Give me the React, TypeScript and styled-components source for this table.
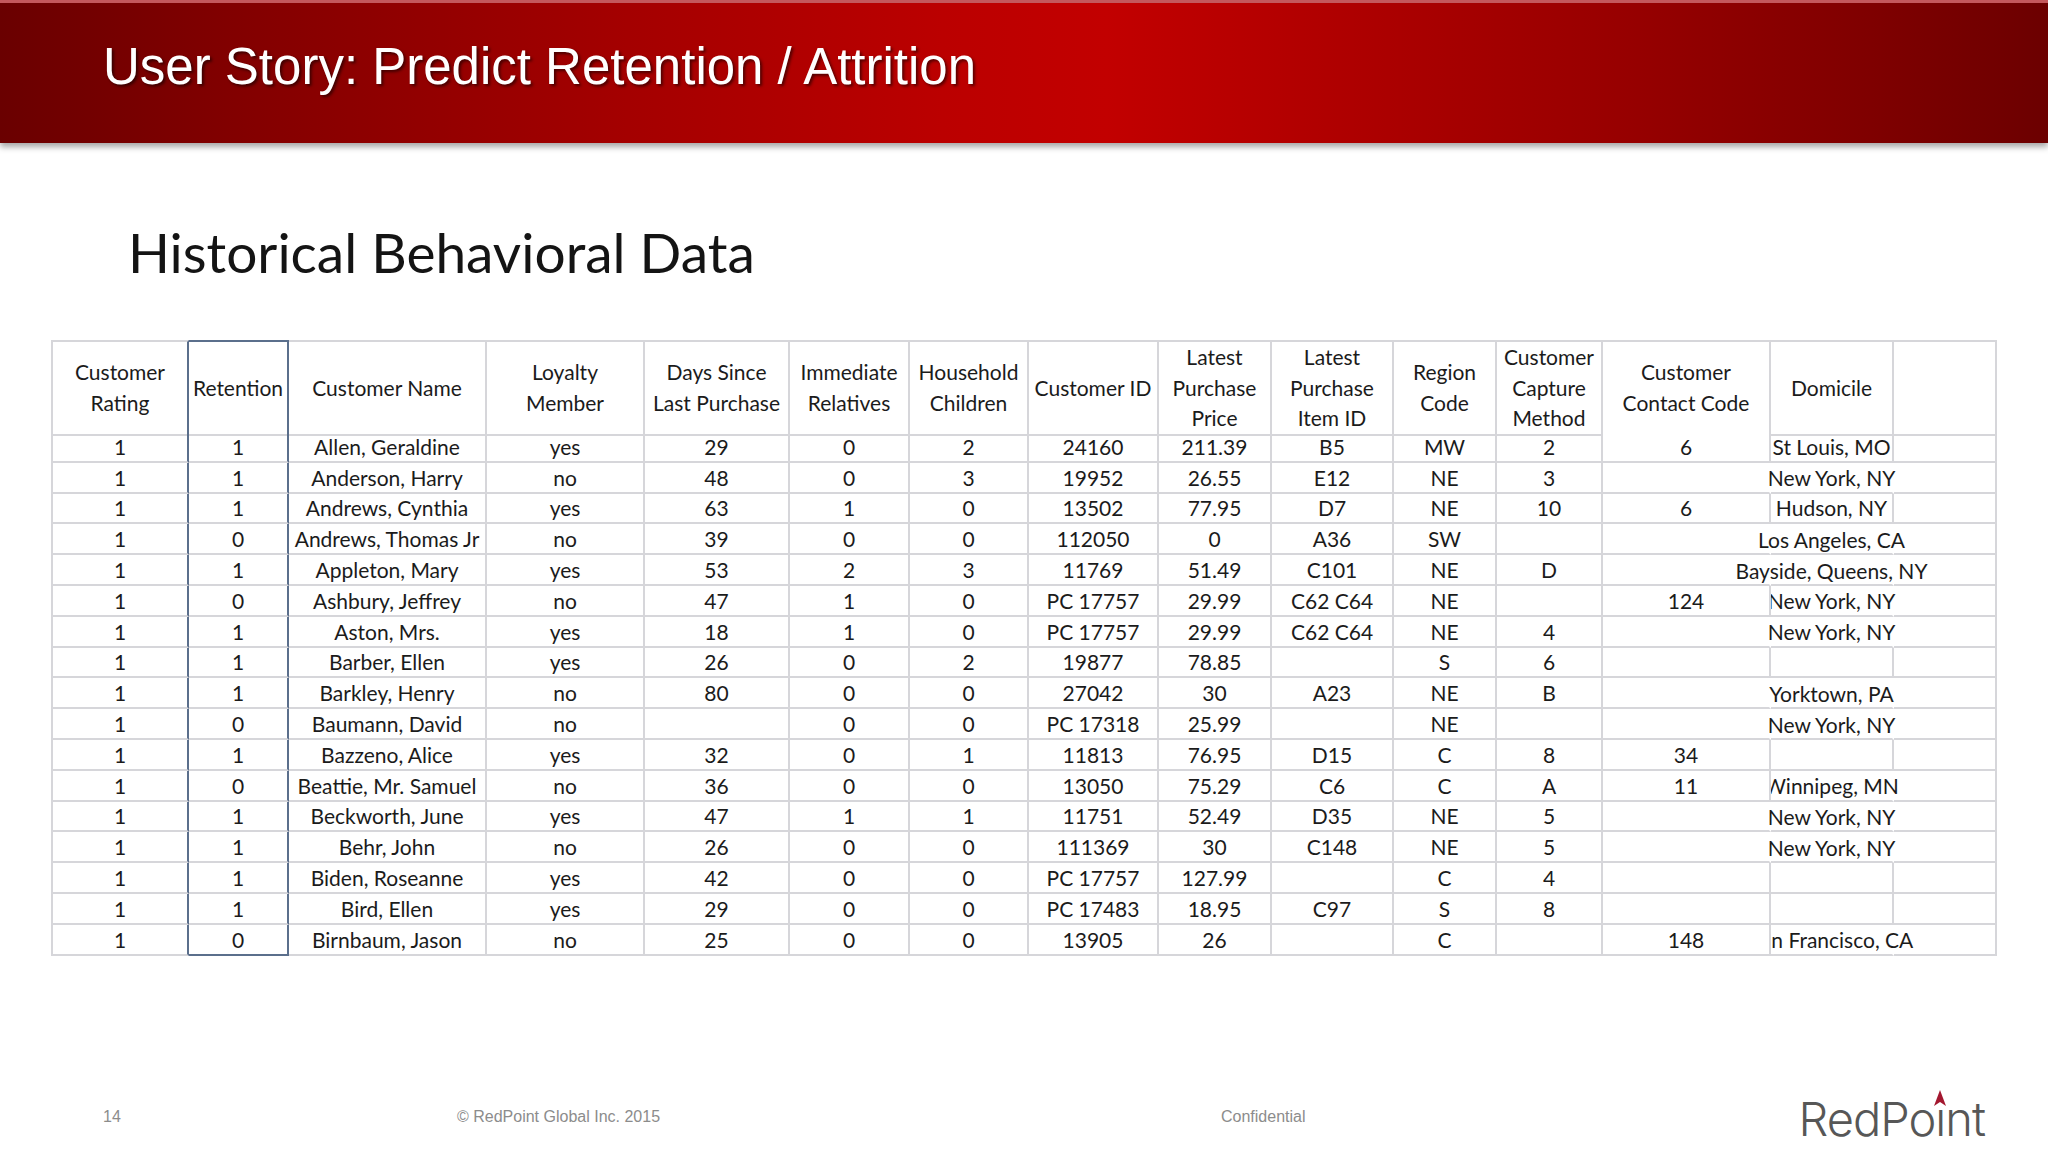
import React from 'react';
import styled, { createGlobalStyle } from 'styled-components';

const GRID = '#d6d6da';
const RET = '#5b6f8c';

// anchos de columna (px), como en la hoja original
const COLS = [136, 100, 198, 158, 145, 120, 119, 130, 113, 122, 103, 106, 168, 123, 103];

const HEADERS = [
  'Customer\nRating',
  'Retention',
  'Customer Name',
  'Loyalty\nMember',
  'Days Since\nLast Purchase',
  'Immediate\nRelatives',
  'Household\nChildren',
  'Customer ID',
  'Latest\nPurchase\nPrice',
  'Latest\nPurchase\nItem ID',
  'Region\nCode',
  'Customer\nCapture\nMethod',
  'Customer\nContact Code',
  'Domicile',
  '',
];

const ROWS: string[][] = [
  ['1', '1', 'Allen, Geraldine', 'yes', '29', '0', '2', '24160', '211.39', 'B5', 'MW', '2', '6', 'St Louis, MO'],
  ['1', '1', 'Anderson, Harry', 'no', '48', '0', '3', '19952', '26.55', 'E12', 'NE', '3', '', 'New York, NY'],
  ['1', '1', 'Andrews, Cynthia', 'yes', '63', '1', '0', '13502', '77.95', 'D7', 'NE', '10', '6', 'Hudson, NY'],
  ['1', '0', 'Andrews, Thomas Jr', 'no', '39', '0', '0', '112050', '0', 'A36', 'SW', '', '', 'Los Angeles, CA'],
  ['1', '1', 'Appleton, Mary', 'yes', '53', '2', '3', '11769', '51.49', 'C101', 'NE', 'D', '', 'Bayside, Queens, NY'],
  ['1', '0', 'Ashbury, Jeffrey', 'no', '47', '1', '0', 'PC 17757', '29.99', 'C62 C64', 'NE', '', '124', 'New York, NY'],
  ['1', '1', 'Aston, Mrs.', 'yes', '18', '1', '0', 'PC 17757', '29.99', 'C62 C64', 'NE', '4', '', 'New York, NY'],
  ['1', '1', 'Barber, Ellen', 'yes', '26', '0', '2', '19877', '78.85', '', 'S', '6', '', ''],
  ['1', '1', 'Barkley, Henry', 'no', '80', '0', '0', '27042', '30', 'A23', 'NE', 'B', '', 'Yorktown, PA'],
  ['1', '0', 'Baumann, David', 'no', '', '0', '0', 'PC 17318', '25.99', '', 'NE', '', '', 'New York, NY'],
  ['1', '1', 'Bazzeno, Alice', 'yes', '32', '0', '1', '11813', '76.95', 'D15', 'C', '8', '34', ''],
  ['1', '0', 'Beattie, Mr. Samuel', 'no', '36', '0', '0', '13050', '75.29', 'C6', 'C', 'A', '11', 'Winnipeg, MN'],
  ['1', '1', 'Beckworth, June', 'yes', '47', '1', '1', '11751', '52.49', 'D35', 'NE', '5', '', 'New York, NY'],
  ['1', '1', 'Behr, John', 'no', '26', '0', '0', '111369', '30', 'C148', 'NE', '5', '', 'New York, NY'],
  ['1', '1', 'Biden, Roseanne', 'yes', '42', '0', '0', 'PC 17757', '127.99', '', 'C', '4', '', ''],
  ['1', '1', 'Bird, Ellen', 'yes', '29', '0', '0', 'PC 17483', '18.95', 'C97', 'S', '8', '', ''],
  ['1', '0', 'Birnbaum, Jason', 'no', '25', '0', '0', '13905', '26', '', 'C', '', '148', 'San Francisco, CA'],
];

// textos que caben en la celda de Domicile (los demás se desbordan, como en Excel)
const FITS = new Set(['St Louis, MO', 'Hudson, NY', '']);

const GlobalStyle = createGlobalStyle`
  html, body {
    margin: 0;
    padding: 0;
    background: #ffffff;
  }
  * {
    box-sizing: border-box;
  }
`;

const Page = styled.div`
  width: 2048px;
  min-height: 1152px;
  display: flex;
  flex-direction: column;
  background: #ffffff;
  overflow: hidden;
`;

// Barra roja del título
const TitleBar = styled.header`
  height: 143px;
  padding: 34px 0 0 103px;
  border-top: 3px solid #c4585c;
  background: linear-gradient(
    90deg,
    #6a0000 0%,
    #830000 12%,
    #a30000 30%,
    #bb0000 46%,
    #c20000 54%,
    #ae0000 66%,
    #980000 79%,
    #820000 90%,
    #6c0000 100%
  );
  box-shadow: 0 4px 6px rgba(0, 0, 0, 0.35);
`;

const SlideTitle = styled.h1`
  margin: 0;
  font-family: 'Liberation Sans', Arial, sans-serif;
  font-weight: normal;
  font-size: 51px;
  line-height: normal;
  color: #ffffff;
  text-shadow: 2px 2px 3px rgba(0, 0, 0, 0.55);
`;

const Subtitle = styled.h2`
  margin: 75px 0 0 128px;
  font-family: Lato, 'Open Sans', sans-serif;
  font-weight: normal;
  font-size: 55px;
  line-height: 68px;
  color: #141414;
`;

const Table = styled.div`
  margin: 54px 0 0 51px;
  width: 1946px;
  font-family: Lato, 'Open Sans', sans-serif;
  font-size: 21px;
  color: #1b1b1b;
`;

const Row = styled.div<{ $head?: boolean }>`
  display: grid;
  grid-template-columns: ${COLS.map((c) => `${c}px`).join(' ')};
  height: ${(p) => (p.$head ? '92px' : '30.8px')};
  border-left: 2px solid ${GRID};
`;

const Cell = styled.div<{ $rc?: string; $bc?: string; $tc?: string; $cover?: boolean; $head?: boolean }>`
  position: relative;
  display: flex;
  align-items: center;
  justify-content: center;
  text-align: center;
  white-space: ${(p) => (p.$head ? 'pre-line' : 'nowrap')};
  line-height: ${(p) => (p.$head ? '30.7px' : '1')};
  border-right: 2px solid ${(p) => p.$rc ?? GRID};
  border-bottom: 2px solid ${(p) => p.$bc ?? GRID};
  border-top: ${(p) => (p.$tc ? `2px solid ${p.$tc}` : 'none')};
  ${(p) => (p.$cover ? 'background: #ffffff; z-index: 1;' : '')}
`;

// texto desbordado de Domicile, centrado sobre su celda
const Spill = styled.span`
  position: absolute;
  left: 50%;
  top: 50%;
  transform: translate(-50%, -50%);
  white-space: nowrap;
`;

const Footer = styled.footer`
  margin-top: auto;
  height: 74px;
  display: flex;
  align-items: center;
  padding: 0 63px 0 103px;
`;

const FootText = styled.span<{ $w?: number }>`
  flex: 0 0 ${(p) => (p.$w ? `${p.$w}px` : 'auto')};
  margin-top: 4px;
  font-family: 'Liberation Sans', Arial, sans-serif;
  font-size: 16px;
  color: #8c8c8c;
`;

const Logo = styled.div`
  margin-left: auto;
  margin-top: 6px;
  font-family: Inter, 'Liberation Sans', sans-serif;
  font-weight: 350;
  font-size: 47px;
  letter-spacing: -1px;
  line-height: 1;
  color: #575757;
`;

const LogoI = styled.span`
  position: relative;
`;

const Arrow = styled.svg`
  position: absolute;
  left: 50%;
  top: 0px;
  transform: translateX(-50%);
`;

function borderRight(col: number, row: string[] | null): string | undefined {
  if (col === 0 || col === 1) return RET;
  if (!row) return undefined;
  const dom = row[13] ?? '';
  const spills = !FITS.has(dom);
  if (spills && col === 13) return 'transparent';
  if (spills && col === 12 && row[12] === '') return 'transparent';
  return undefined;
}

const App: React.FC = () => {
  return (
    <Page>
      <GlobalStyle />
      <TitleBar>
        <SlideTitle>User Story: Predict Retention / Attrition</SlideTitle>
      </TitleBar>

      <Subtitle>Historical Behavioral Data</Subtitle>

      <Table>
        <Row $head>
          {HEADERS.map((h, i) => (
            <Cell key={i} $head $tc={i === 1 ? RET : GRID} $rc={borderRight(i, null)}>
              {h}
            </Cell>
          ))}
        </Row>
        {ROWS.map((r, ri) => {
          const last = ri === ROWS.length - 1;
          const cells = [...r, ''];
          const spills = !FITS.has(r[13]);
          return (
            <Row key={ri}>
              {cells.map((v, ci) => (
                <Cell
                  key={ci}
                  $rc={borderRight(ci, r)}
                  $bc={last && ci === 1 ? RET : undefined}
                  $cover={ci === 12 && v !== ''}
                >
                  {ci === 13 && spills ? <Spill>{v}</Spill> : v}
                </Cell>
              ))}
            </Row>
          );
        })}
      </Table>

      <Footer>
        <FootText $w={354}>14</FootText>
        <FootText $w={764}>© RedPoint Global Inc. 2015</FootText>
        <FootText>Confidential</FootText>
        <Logo>
          RedPo
          <LogoI>
            ı
            <Arrow width="12" height="16" viewBox="0 0 12 16">
              <polygon points="6,0 12,16 6,12 0,16" fill="#a3172f" />
            </Arrow>
          </LogoI>
          nt
        </Logo>
      </Footer>
    </Page>
  );
};

export default App;
